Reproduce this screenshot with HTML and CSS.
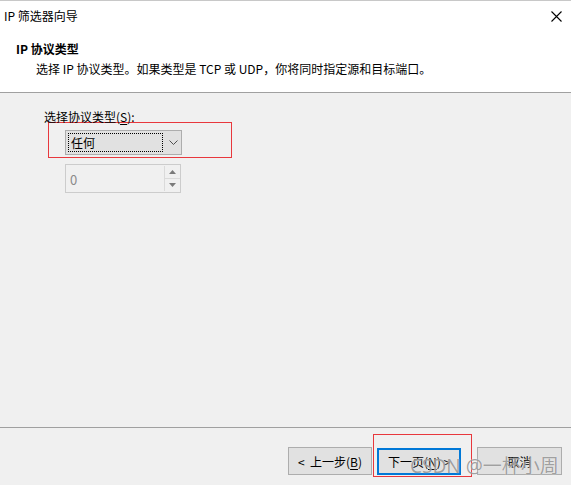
FILE: index.html
```html
<!DOCTYPE html>
<html>
<head>
    <meta charset="utf-8">
    <title>IP 筛选器向导</title>
    <link rel="stylesheet" href="styles.css">
</head>
<body>
    <div class="dialog">
        <div class="header">
            <div class="titlebar">
                <span class="title">IP 筛选器向导</span>
                <svg class="close" width="11" height="11" viewBox="0 0 11 11">
                    <path d="M0.5 0.5 L10.5 10.5 M10.5 0.5 L0.5 10.5" stroke="#000" stroke-width="1.1" fill="none"/>
                </svg>
            </div>
            <div class="heading">IP 协议类型</div>
            <div class="desc">选择 IP 协议类型。如果类型是 TCP 或 UDP，你将同时指定源和目标端口。</div>
        </div>

        <div class="content">
            <label class="field-label">选择协议类型(<u>S</u>):</label>
            <div class="mark-box">
                <div class="combo">
                    <span class="combo-value">任何</span>
                    <svg class="chevron" width="9" height="5" viewBox="0 0 9 5">
                        <path d="M0.5 0.5 L4.5 4.5 L8.5 0.5" stroke="#505050" stroke-width="1" fill="none"/>
                    </svg>
                </div>
            </div>
            <div class="spin">
                <span class="spin-value">0</span>
                <div class="spin-buttons">
                    <div class="spin-btn">
                        <svg width="7" height="4" viewBox="0 0 7 4"><path d="M0 4 L3.5 0 L7 4 Z" fill="#7a7a7a"/></svg>
                    </div>
                    <div class="spin-btn">
                        <svg width="7" height="4" viewBox="0 0 7 4"><path d="M0 0 L3.5 4 L7 0 Z" fill="#7a7a7a"/></svg>
                    </div>
                </div>
            </div>
        </div>

        <div class="footer">
            <button class="btn">&lt;&nbsp; 上一步(<u>B</u>)</button>
            <span class="next-wrap">
                <button class="btn btn-default">下一页(<u>N</u>) &gt;</button>
            </span>
            <button class="btn btn-cancel">取消</button>
        </div>

        <div class="watermark">CSDN @一杯小周</div>
    </div>
</body>
</html>
```

FILE: styles.css
```css
body {
    margin: 0;
    padding: 0;
    font-family: "Noto Sans CJK SC", "Noto Sans", sans-serif;
    font-size: 12px;
    color: #000;
    background-color: #f0f0f0;
}
.dialog {
    position: relative;
    width: 571px;
    height: 485px;
    display: flex;
    flex-direction: column;
    overflow: hidden;
}
.header {
    background-color: #fff;
    height: 93px;
    border-top: 1px solid #c8c8c8;
    border-bottom: 1px solid #a0a0a0;
    box-sizing: border-box;
}
.titlebar {
    height: 30px;
    display: flex;
    align-items: center;
    justify-content: space-between;
    padding: 0 9px 0 4px;
}
.title {
    line-height: 16px;
}
.close {
    margin-top: 1px;
}
.heading {
    margin-top: 9px;
    padding-left: 16px;
    font-weight: bold;
    line-height: 18px;
}
.desc {
    margin-top: 2px;
    padding-left: 36px;
    line-height: 18px;
}
.content {
    flex: 1;
    padding: 17px 0 0 44px;
}
.field-label {
    display: block;
    line-height: 13px;
    height: 13px;
}
.field-label u,
.btn u {
    text-decoration: underline;
    text-underline-offset: 2px;
}
.mark-box {
    width: 184px;
    height: 36px;
    margin: -1px 0 0 4px;
    border: 1px solid #e8383d;
    padding: 7px 0 0 16px;
    box-sizing: border-box;
}
.combo {
    width: 117px;
    height: 25px;
    box-sizing: border-box;
    border: 1px solid #adadad;
    background-color: #e1e1e1;
    display: flex;
    align-items: center;
    padding: 2px;
}
.combo-value {
    width: 95px;
    height: 19px;
    box-sizing: border-box;
    border: 1px dotted #000;
    padding-left: 2px;
    line-height: 17px;
}
.chevron {
    margin-left: 6px;
}
.spin {
    width: 116px;
    height: 29px;
    margin: 6px 0 0 21px;
    box-sizing: border-box;
    border: 1px solid #cccccc;
    background-color: #f0f0f0;
    display: flex;
}
.spin-value {
    flex: 1;
    padding: 5px 0 0 4px;
    color: #8a8a8a;
    font-size: 13px;
}
.spin-buttons {
    width: 15px;
    margin: 1px 0;
    display: flex;
    flex-direction: column;
    border-left: 1px solid #dadada;
}
.spin-btn {
    flex: 1;
    display: flex;
    align-items: center;
    justify-content: center;
}
.spin-btn + .spin-btn {
    border-top: 1px solid #dadada;
}
.footer {
    height: 58px;
    box-sizing: border-box;
    border-top: 1px solid #a0a0a0;
    display: flex;
    justify-content: flex-end;
    align-items: flex-start;
    padding: 19px 9px 0 0;
}
.btn {
    width: 84px;
    height: 28px;
    box-sizing: border-box;
    border: 1px solid #adadad;
    background-color: #e1e1e1;
    font-family: "Noto Sans CJK SC", "Noto Sans", sans-serif;
    font-size: 12px;
    color: #000;
    padding: 0;
}
.next-wrap {
    position: relative;
    margin: 0 16px 0 5px;
}
.next-wrap::after {
    content: "";
    position: absolute;
    left: -4px;
    top: -13px;
    right: -11px;
    bottom: -2px;
    border: 1px solid #e8383d;
}
.btn-default {
    border: 2px solid #0078d7;
    height: 27px;
    margin-top: 1px;
}
.btn-cancel {
    width: 85px;
}
.watermark {
    position: absolute;
    left: 410px;
    top: 451px;
    font-family: "Noto Sans", "Noto Sans CJK SC", sans-serif;
    font-size: 19px;
    color: rgba(100, 100, 100, 0.6);
    text-shadow: 0 0 1px rgba(255, 255, 255, 0.9);
    white-space: nowrap;
    pointer-events: none;
}
```
